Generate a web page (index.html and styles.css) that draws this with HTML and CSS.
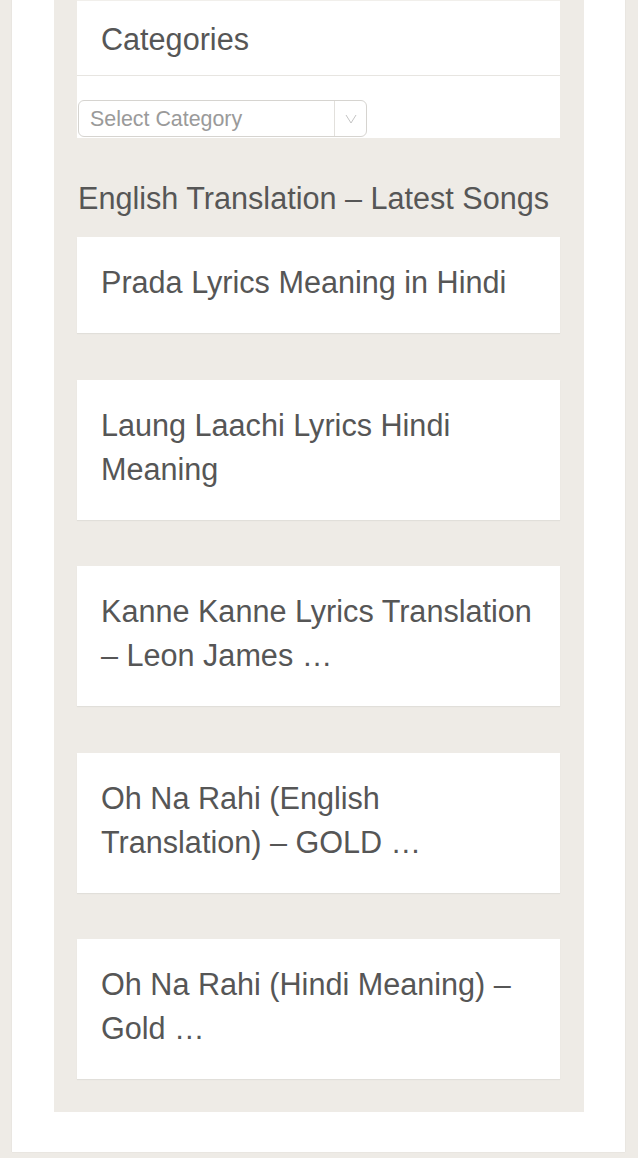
FILE: index.html
```html
<!DOCTYPE html>
<html lang="en">
<head>
<meta charset="utf-8">
<title>Sidebar</title>
<link rel="stylesheet" href="styles.css">
</head>
<body>
<div class="wrapper">
  <aside class="sidebar">
    <section class="widget">
      <h3 class="widget-title">Categories</h3>
      <div class="widget-body">
        <div class="select">
          <span class="select-text">Select Category</span>
          <span class="select-arrow">
            <svg width="12" height="10" viewBox="0 0 12 10"><polyline points="1,1 6,9 11,1" fill="none" stroke="#c4c4c4" stroke-width="1"/></svg>
          </span>
        </div>
      </div>
    </section>
    <h3 class="section-title">English Translation – Latest Songs</h3>
    <ul class="posts">
      <li class="post">Prada Lyrics Meaning in Hindi</li>
      <li class="post">Laung Laachi Lyrics Hindi Meaning</li>
      <li class="post">Kanne Kanne Lyrics Translation – Leon James …</li>
      <li class="post">Oh Na Rahi (English Translation) – GOLD …</li>
      <li class="post">Oh Na Rahi (Hindi Meaning) – Gold …</li>
    </ul>
  </aside>
</div>
</body>
</html>
```

FILE: styles.css
```css
html, body {
  margin: 0;
  padding: 0;
}
body {
  background: #eeebe6;
  font-family: "Liberation Sans", Arial, Helvetica, sans-serif;
  color: #565656;
  height: 1158px;
  overflow: hidden;
}
.wrapper {
  background: #ffffff;
  margin: 0 13px 0 12px;
  padding: 0 41px 40px 42px;
  box-shadow: 0 0 1px rgba(0, 0, 0, 0.12);
}
.sidebar {
  background: #eeebe6;
  padding: 0 24px 33px 23px;
}
.widget {
  background: #ffffff;
  border-top: 1px solid #f1efeb;
}
.widget-title {
  margin: 0;
  font-weight: normal;
  font-size: 30.6px;
  line-height: 44px;
  padding: 16px 16px 14px 24px;
  border-bottom: 1px solid #e7e5e1;
}
.widget-body {
  padding: 24px 0 1px 0;
}
.select {
  display: flex;
  align-items: stretch;
  width: 289px;
  height: 37px;
  box-sizing: border-box;
  border: 1px solid #d6d4d0;
  border-radius: 6px;
  background: #fff;
  margin-left: 1px;
}
.select-text {
  flex: 1;
  display: flex;
  align-items: center;
  padding: 1px 0 0 11px;
  font-size: 21.4px;
  color: #9a9a9a;
}
.select-arrow {
  width: 31px;
  border-left: 1px solid #e2e0dc;
  display: flex;
  align-items: center;
  justify-content: center;
}
.section-title {
  margin: 38px 0 17px 1px;
  font-weight: normal;
  font-size: 30.6px;
  line-height: 44px;
}
.posts {
  list-style: none;
  margin: 0;
  padding: 0;
}
.post {
  background: #ffffff;
  padding: 23px 16px 29px 24px;
  font-size: 30.6px;
  line-height: 44px;
  margin-bottom: 46.5px;
  box-shadow: 0 1px 1px rgba(0, 0, 0, 0.05);
}
.post:last-child {
  margin-bottom: 0;
}
```
